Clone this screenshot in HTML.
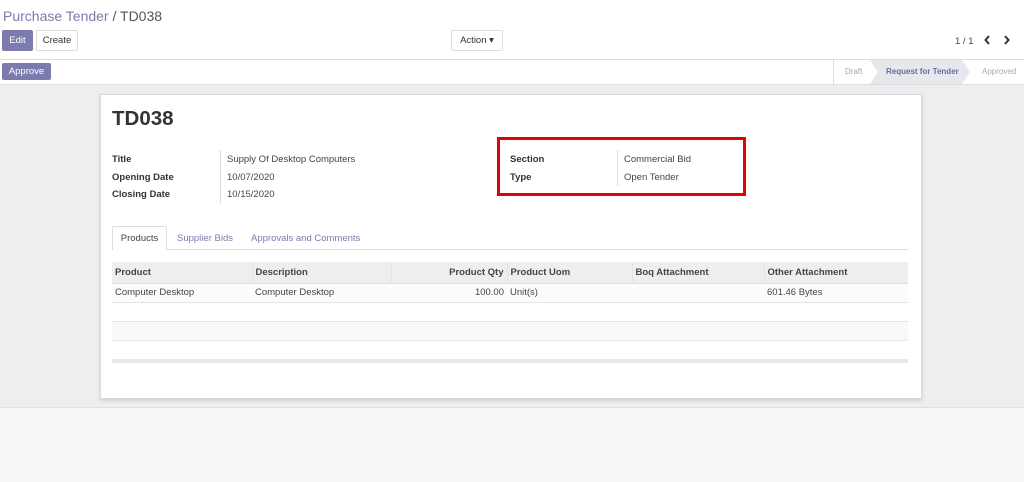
<!DOCTYPE html><html><head><style>
body{margin:0;width:1024px;height:482px;overflow:hidden;font-family:"Liberation Sans",sans-serif;font-size:9.5px;color:#444;background:#f7f7f7;position:relative}
.a{position:absolute}
.btn{position:absolute;font-size:9.5px;border-radius:2px;text-align:center;box-sizing:border-box}
td,th{padding:0 3px;white-space:nowrap}
</style></head><body>
<div class="a" style="left:0;top:0;width:1024px;height:59px;background:#fff;border-bottom:1px solid #ddd"></div>
<div class="a" style="left:3px;top:8px;font-size:14px;color:#7c7bad">Purchase Tender <span style="color:#555">/ TD038</span></div>
<div class="btn" style="left:2px;top:30px;width:31px;height:21px;line-height:21px;background:#7c7bad;color:#fff">Edit</div>
<div class="btn" style="left:36px;top:30px;width:42px;height:21px;line-height:19px;border:1px solid #ddd;color:#333;background:#fff">Create</div>
<div class="btn" style="left:451px;top:30px;width:52px;height:21px;line-height:19px;border:1px solid #ddd;color:#333;background:#fff">Action ▾</div>
<div class="a" style="left:955px;top:36px;color:#444">1 / 1</div>
<svg class="a" style="left:983px;top:35px" width="30" height="10"><path d="M6 1L2.5 5 6 9M22 1L25.5 5 22 9" fill="none" stroke="#333" stroke-width="2"/></svg>
<div class="a" style="left:0;top:60px;width:1024px;height:24px;background:#fff;border-bottom:1px solid #ddd"></div>
<div class="btn" style="left:2px;top:63px;width:49px;height:17px;line-height:17px;background:#7c7bad;color:#fff">Approve</div>
<div class="a" style="left:833px;top:60px;width:1px;height:24px;background:#ddd"></div>
<div class="a" style="left:845px;top:67px;font-size:8px;color:#aaa">Draft</div>
<svg class="a" style="left:870px;top:60px" width="110" height="24"><polygon points="0,0 92,0 100,12 92,24 0,24 8,12" fill="#e6e8ee"/></svg>
<div class="a" style="left:886px;top:67px;font-size:8px;font-weight:bold;color:#6b6a9a">Request for Tender</div>
<div class="a" style="left:982px;top:67px;font-size:8px;color:#aaa">Approved</div>
<div class="a" style="left:0;top:85px;width:1024px;height:322px;background:#eeeeee;border-bottom:1px solid #e0e0e0"></div>
<div class="a" style="left:100px;top:94px;width:820px;height:303px;background:#fff;border:1px solid #d8d8e0;box-shadow:0 2px 4px rgba(0,0,0,.12)"></div>
<div class="a" style="left:112px;top:107px;font-size:20.5px;font-weight:bold;color:#333">TD038</div>
<div class="a" style="left:112px;top:151px;font-weight:bold;color:#333;line-height:17.5px">Title<br>Opening Date<br>Closing Date</div>
<div class="a" style="left:220px;top:150px;width:1px;height:54px;background:#ddd"></div>
<div class="a" style="left:227px;top:151px;line-height:17.5px">Supply Of Desktop Computers<br>10/07/2020<br>10/15/2020</div>
<div class="a" style="left:510px;top:151px;font-weight:bold;color:#333;line-height:17.5px">Section<br>Type</div>
<div class="a" style="left:617px;top:150px;width:1px;height:36px;background:#ddd"></div>
<div class="a" style="left:624px;top:151px;line-height:17.5px">Commercial Bid<br>Open Tender</div>
<div class="a" style="left:497px;top:137px;width:243px;height:53px;border:3px solid #e60000"></div>
<div class="a" style="left:112px;top:249px;width:796px;height:1px;background:#ddd"></div>
<div class="a" style="left:112px;top:226px;width:55px;height:24px;background:#fff;border:1px solid #ddd;border-bottom:none;border-radius:2px 2px 0 0;box-sizing:border-box;text-align:center;line-height:24px;color:#444">Products</div>
<div class="a" style="left:177px;top:233px;color:#7c7bad">Supplier Bids</div>
<div class="a" style="left:251px;top:233px;color:#7c7bad">Approvals and Comments</div>
<table class="a" style="left:112px;top:262px;width:796px;border-collapse:collapse;table-layout:fixed;font-size:9.5px">
<colgroup><col style="width:140px"><col style="width:139px"><col style="width:116px"><col style="width:125px"><col style="width:132px"><col style="width:144px"></colgroup>
<tr style="height:21px;background:#eee;font-weight:bold;color:#444"><th style="text-align:left;border-right:1px solid #e2e2e2">Product</th><th style="text-align:left;border-right:1px solid #e2e2e2">Description</th><th style="text-align:right;border-right:1px solid #e2e2e2">Product Qty</th><th style="text-align:left;border-right:1px solid #e2e2e2">Product Uom</th><th style="text-align:left;border-right:1px solid #e2e2e2">Boq Attachment</th><th style="text-align:left">Other Attachment</th></tr>
<tr style="height:19px;background:#fcfcfc;border-top:1px solid #ddd;border-bottom:1px solid #e5e5e5"><td>Computer Desktop</td><td>Computer Desktop</td><td style="text-align:right">100.00</td><td>Unit(s)</td><td></td><td>601.46 Bytes</td></tr>
<tr style="height:19px;border-bottom:1px solid #e5e5e5"><td colspan=6></td></tr>
<tr style="height:19px;background:#f9f9f9;border-bottom:1px solid #e5e5e5"><td colspan=6></td></tr>
<tr style="height:19px"><td colspan=6></td></tr>
<tr style="height:4px;background:#e8e8e8"><td colspan=6></td></tr>
</table>
</body></html>
